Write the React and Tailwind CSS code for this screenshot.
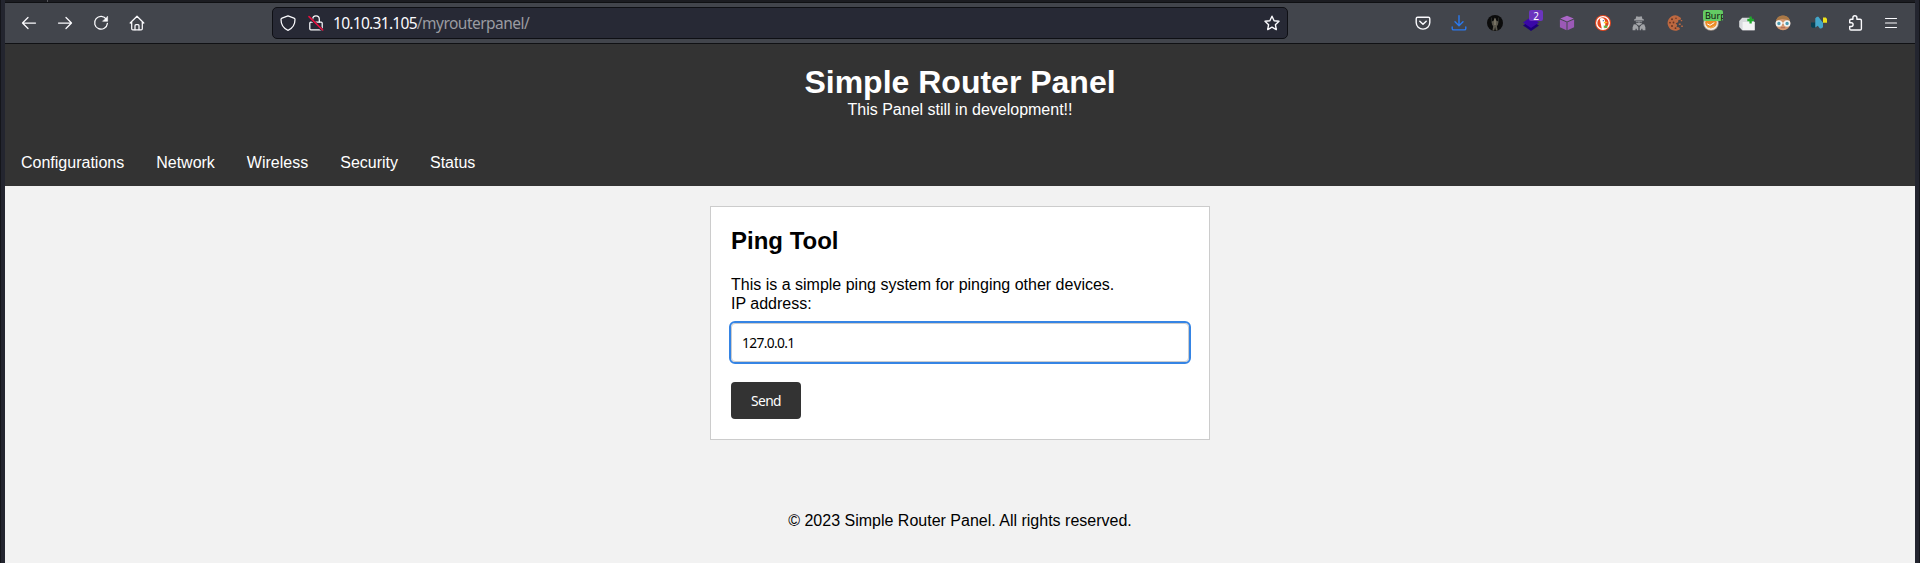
const Icon = ({ children, className = '' }) => (
  <svg
    viewBox="0 0 16 16"
    className={`size-4 shrink-0 ${className}`}
    fill="none"
    stroke="#fbfbfe"
    strokeWidth="1.25"
    strokeLinecap="round"
    strokeLinejoin="round"
  >
    {children}
  </svg>
);

const Back = () => (
  <Icon>
    <path d="M14.5 8H2M7 2.5 1.5 8 7 13.5" />
  </Icon>
);

const Forward = () => (
  <Icon>
    <path d="M1.5 8H14M9 2.5 14.5 8 9 13.5" />
  </Icon>
);

const Reload = () => (
  <Icon>
    <path d="M13.4 4.3A6.4 6.4 0 1 0 14.4 8.4" />
    <path d="M14.6 1.6v4.7H9.9Z" fill="#fbfbfe" strokeWidth=".6" />
  </Icon>
);

const Home = () => (
  <Icon>
    <path d="M1.2 8 8 1.2 14.8 8M2.7 6.7v7a1.2 1.2 0 0 0 1.2 1.2h8.2a1.2 1.2 0 0 0 1.2-1.2v-7" />
    <path d="M6 14.7v-4a1 1 0 0 1 1-1h2a1 1 0 0 1 1 1v4" />
  </Icon>
);

const Shield = () => (
  <Icon>
    <path d="M8 .9 14 3.2c.8.3 1 .7 1 1.4 0 4.7-2 8.7-7 10.7C3 13.3 1 9.3 1 4.6c0-.7.2-1.1 1-1.4Z" />
  </Icon>
);

const InsecureLock = () => (
  <Icon>
    <path d="M4.7 7V4.2a3.3 3.3 0 0 1 6.6 0V7" />
    <path d="M2.8 7.2h10.4c.6 0 1 .4 1 1v5.5c0 .7-.4 1.1-1 1.1H2.8c-.6 0-1-.4-1-1.1V8.2c0-.6.4-1 1-1Z" />
    <path d="M1.2 2.3 14.3 15" stroke="#272935" strokeWidth="2.8" strokeLinecap="butt" />
    <path d="M1 1.6 14.7 15" stroke="#e8103f" strokeWidth="1.6" />
  </Icon>
);

const Star = () => (
  <Icon>
    <path d="m8 1.2 2.1 4.5 4.9.6-3.6 3.4.9 4.9L8 12.2l-4.3 2.4.9-4.9L1 6.3l4.9-.6Z" strokeWidth="1.4" />
  </Icon>
);

const Pocket = () => (
  <Icon>
    <path d="M2.6 2.3h10.8c.8 0 1.4.6 1.4 1.4V7.5a6.8 6.6 0 0 1-13.6 0V3.7c0-.8.6-1.4 1.4-1.4Z" strokeWidth="1.4" />
    <path d="m4.8 6.3 3.2 3 3.2-3" strokeWidth="1.5" />
  </Icon>
);

const Download = () => (
  <Icon>
    <g stroke="#2a79f0" strokeWidth="1.4">
      <path d="M8 .8v9.8M4 6.7l4 4 4-4" />
      <path d="M1.2 12v1.4c0 .9.5 1.5 1.4 1.5h10.8c.9 0 1.4-.6 1.4-1.5V12" />
    </g>
  </Icon>
);

const Figure = () => (
  <Icon>
    <g stroke="none">
      <circle cx="8" cy="8" r="8" fill="#0b0b0b" />
      <path d="M7.9 2.5 8.9 5.3l2.3 1.2-.3 3.5-1 1 .7 4.4H8.8L8.1 12l-.8 3.4H5.5l.7-4.4-1-1-.3-3.5 2.2-1.2Z" fill="#5a574d" />
      <path d="M7.4 3.5h1.2v6.5H7.4Z" fill="#8a8472" />
      <path d="M4.5 3v5M11.5 3v5" stroke="#2b2e2b" strokeWidth=".8" />
    </g>
  </Icon>
);

const Layers = () => (
  <Icon>
    <g stroke="none">
      <path d="M8 5.5 16 10.4 8 16 0 10.4Z" fill="#1d0078" />
      <path d="M8 2 16 7.5 8 13 0 7.5Z" fill="#3a08a8" />
    </g>
  </Icon>
);

const Cube = () => (
  <Icon>
    <g stroke="none">
      <path d="M8 .8 14.7 3.6 8 6.6 1.3 3.6Z" fill="#ab66c8" />
      <path d="M.9 4.5 7.5 7.3v7.9L.9 12.2Z" fill="#9b59b6" />
      <path d="m15.1 4.5-6.6 2.8v7.9l6.6-3Z" fill="#9b59b6" />
    </g>
  </Icon>
);

const Duck = () => (
  <Icon>
    <g stroke="none">
      <circle cx="8" cy="8" r="8" fill="#e4471f" />
      <circle cx="8" cy="8" r="6.3" stroke="#fff" strokeWidth="1.3" />
      <path d="M4.8 3.7c2-1.5 5-.6 5.2 2.3l.3 3.2-.6 4.6c-1 .4-2 .4-2.8.1L5.6 8Z" fill="#fff" />
      <path d="M8.8 7.2c1.4-.6 3-.5 3.8 0-.8.9-2.4 1.4-3.7 1Z" fill="#f8bc1c" />
      <path d="m8.7 10.2 1.6.8 2-1v3.2l-1.9-.7-1.6.6Z" fill="#5bb847" />
      <circle cx="8.3" cy="5.7" r=".6" fill="#304a73" />
    </g>
  </Icon>
);

const Spy = () => (
  <Icon>
    <g stroke="none" fill="#a2a4a8">
      <path d="M5.3 1.2 8 1.8l2.7-.6.8 2.8 1.5.6v.9H3v-.9L4.5 4Z" />
      <path d="M4.7 6.3h6.6L10.6 9 8 10.7 5.4 9Z" />
      <path d="m2.8 9.2 2.4.3L7.3 12v3.2H5.8v-1.5H4.5v1.5H1.6v-3Zm10.4 0-2.4.3L8.7 12v3.2h1.5v-1.5h1.3v1.5h2.9v-3Z" />
    </g>
    <path d="M5.5 7.3h1.6M8.9 7.3h1.6" stroke="#55585e" />
  </Icon>
);

const Cookie = () => (
  <Icon>
    <g stroke="none">
      <path d="M10.5.7A7.7 7.7 0 1 0 13.2 14l-1.4-1.7-2.3-.4.7-2-1.6-1.7 2.5-.9.3-2.4 2.3-.1.3-1.9Z" fill="#bd6840" />
      <g fill="#683423">
        <circle cx="5" cy="4.2" r="1" />
        <circle cx="9" cy="3.2" r=".8" />
        <circle cx="3" cy="7.7" r=".9" />
        <circle cx="6.5" cy="7.5" r=".9" />
        <circle cx="5" cy="11" r="1" />
        <circle cx="8.5" cy="13.2" r=".9" />
      </g>
      <path d="M11.8 8.4h1.9V10h-1.9Zm2.4 2h1.6v1.6h-1.6ZM13.8 5h1.4v1.2h-1.4Z" fill="#bd6840" />
    </g>
  </Icon>
);

const Fox = () => (
  <Icon>
    <g stroke="none">
      <circle cx="8" cy="8" r="7.8" fill="#a99b90" />
      <circle cx="8" cy="8" r="6.9" fill="#f3eee7" />
      <circle cx="8" cy="7.5" r="5.8" fill="#ed8b25" />
      <path d="M4.5 9 7 10.3l4-2.5" stroke="#fff" strokeWidth="1" />
      <path d="M4.5 12 8 13l3.5-2" stroke="#f7b35d" strokeWidth="1" />
    </g>
  </Icon>
);

const Mailbox = () => (
  <Icon>
    <g stroke="none">
      <path d="m.2 6 3-3.200h8.300L15.600 7v8.200H3.200L.2 12Z" fill="#d9dbde" />
      <path d="M3.6 7h12v8.200h-12Z" fill="#f3f3f4" />
    </g>
    <path d="M8.3 5h6.600M11.600 1.500v7" stroke="#20a82c" strokeWidth="2.300" strokeLinecap="butt" />
  </Icon>
);

const Face = () => (
  <Icon>
    <g stroke="none">
      <circle cx="8" cy="8" r="7.3" fill="#d3976e" />
      <path d="M1 6.5C1.4 2.7 4 .5 8 .5s6.700 2.300 7 6l-3-1.700-5-.7-3.700 1Z" fill="#a97846" />
      <path d="M6.2 12.7h3.6" stroke="#a95c4d" strokeWidth=".8" />
    </g>
    <circle cx="3.9" cy="8.5" r="2.5" fill="#4d9aaf" stroke="#f0f3f3" strokeWidth="1.6" />
    <circle cx="12.1" cy="8.5" r="2.5" fill="#4d9aaf" stroke="#f0f3f3" strokeWidth="1.6" />
    <path d="M6.5 8h3" stroke="#fff" strokeWidth="1" />
  </Icon>
);

const NLogo = () => (
  <Icon>
    <g stroke="none">
      <path d="M0 7.5h4.3v5.2H1.3L0 11.4Z" fill="#073f52" />
      <path d="M12 2.5h2.8L16 3.7v4h-4Z" fill="#f1e31a" />
      <path d="M4.3 3.2 6 1.8h1.4L12 7.7v4.5l-1.8 1.3H8.900L6.800 10.800 4.300 12.500Z" fill="#43a7cb" />
    </g>
  </Icon>
);

const Puzzle = () => (
  <Icon>
    <path
      d="M5.9 4.2V2.8a2 2 0 0 1 4 0v1.4h3.2c.8 0 1.3.5 1.3 1.3v8.2c0 .8-.5 1.3-1.3 1.3H4c-.8 0-1.3-.5-1.3-1.3v-2.2h1.5a1.9 1.9 0 0 0 0-3.8H2.7V5.5c0-.8.5-1.3 1.3-1.3Z"
      strokeWidth="1.4"
    />
  </Icon>
);

const Menu = () => (
  <Icon>
    <path d="M2.5 3.500h11M2.5 8h11M2.5 12.500h11" strokeWidth="1.2" />
  </Icon>
);

const navItems = ['Configurations', 'Network', 'Wireless', 'Security', 'Status'];

function Toolbar() {
  return (
    <div className="flex h-[41px] shrink-0 items-center border-b border-[#101114] bg-[#42454c]">
      <div className="flex w-[267px] shrink-0 gap-5 pl-4">
        <Back />
        <Forward />
        <Reload />
        <Home />
      </div>
      <div className="flex h-8 w-[1016px] shrink-0 items-center rounded-[5px] border border-[#0e0f14] bg-[#272935] pl-[7px] pr-[7px] font-['Noto_Sans','Open_Sans',sans-serif] text-[15.5px]">
        <Shield />
        <div className="ml-3 flex">
          <InsecureLock />
        </div>
        <div className="ml-[9px] flex-1 whitespace-nowrap pt-px leading-none text-[#9a9ba1]">
          <span className="tracking-[-0.7px] text-[#fbfbfe]">10.10.31.105</span>
          <span className="tracking-[-0.53px]">/myrouterpanel/</span>
        </div>
        <Star />
      </div>
      <div className="ml-[127px] flex gap-5">
        <Pocket />
        <Download />
        <Figure />
        <div className="relative flex">
          <Layers />
          <span className="absolute -top-[5px] left-[6px] flex h-[11px] w-3.5 items-center justify-center rounded-[2px] bg-[#6b35be] font-['Noto_Sans',sans-serif] text-[10px] leading-none text-white">
            2
          </span>
        </div>
        <Cube />
        <Duck />
        <Spy />
        <Cookie />
        <div className="relative flex">
          <Fox />
          <span className="absolute -top-[5px] left-0 h-[11px] w-5 overflow-hidden whitespace-nowrap rounded-[2px] bg-[#63cb63] pl-0.5 font-['Noto_Sans',sans-serif] text-[9px] leading-[11px] text-[#111]">
            Burp
          </span>
        </div>
        <Mailbox />
        <Face />
        <NLogo />
        <Puzzle />
        <Menu />
      </div>
    </div>
  );
}

export default function App() {
  return (
    <div className="flex h-[563px] w-[1920px] overflow-hidden bg-[#23252f] font-['Liberation_Sans',Arial,sans-serif] text-base leading-[19px] text-black">
      <div className="w-[5px] shrink-0 border-l border-[#14151a]" />
      <div className="flex w-[1910px] flex-col bg-[#f2f2f2]">
        <div className="flex h-[3px] shrink-0 border-b border-[#0f1013] bg-[#1b1c21] pl-[42px]">
          <div className="h-0.5 w-px bg-[#55565c]" />
        </div>
        <Toolbar />
        <header className="flex h-[142px] shrink-0 flex-col bg-[#333] text-white">
          <div className="pt-5 text-center">
            <h1 className="text-[32px] font-bold leading-[36px]">Simple Router Panel</h1>
            <p>This Panel still in development!!</p>
          </div>
          <nav className="mt-[34px] flex gap-8 pl-4">
            {navItems.map((item) => (
              <a key={item} href="#">
                {item}
              </a>
            ))}
          </nav>
        </header>
        <main className="mx-auto mt-5 h-[234px] w-[500px] border border-[#ccc] bg-white px-5 pt-5">
          <h2 className="text-2xl font-bold leading-7">Ping Tool</h2>
          <p className="mt-5">This is a simple ping system for pinging other devices.</p>
          <label htmlFor="ip" className="block">
            IP address:
          </label>
          <input
            id="ip"
            type="text"
            defaultValue="127.0.0.1"
            className="mt-2.5 block h-[39px] w-full rounded-[4px] border border-[#ccc] px-2.5 font-['Noto_Sans','Open_Sans',sans-serif] text-[13.8px] tracking-[-0.65px] outline-2 outline-[#3584e4]"
          />
          <button className="mt-5 block h-[37px] w-[70px] rounded-[4px] bg-[#333] font-['Noto_Sans','Open_Sans',sans-serif] text-[13.8px] tracking-[-0.65px] text-white">
            Send
          </button>
        </main>
        <footer className="mt-[71px] text-center">© 2023 Simple Router Panel. All rights reserved.</footer>
      </div>
      <div className="w-[5px] shrink-0 border-r border-[#14151a]" />
    </div>
  );
}
